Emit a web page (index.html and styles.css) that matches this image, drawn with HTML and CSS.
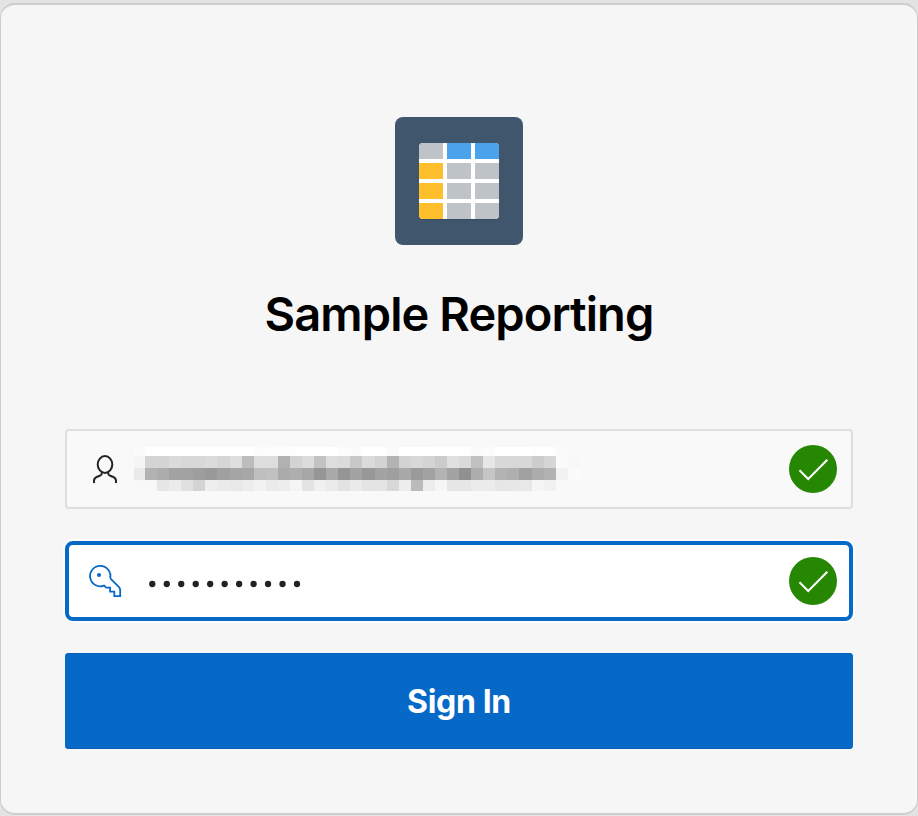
FILE: index.html
```html
<!DOCTYPE html>
<html lang="en">
<head>
<meta charset="utf-8">
<title>Sample Reporting</title>
<link rel="stylesheet" href="styles.css">
</head>
<body>
<main class="window">
  <svg class="logo" viewBox="0 0 128 128">
    <rect width="128" height="128" rx="8" fill="#3f566d"/>
    <rect x="24" y="27" width="80" height="76" rx="4" fill="#384c61"/>
    <clipPath id="sheet"><rect x="24" y="26" width="80" height="76" rx="4"/></clipPath>
    <g clip-path="url(#sheet)">
      <rect x="24" y="26" width="80" height="76" fill="#fff"/>
      <path fill="#bdc3c7" d="M24 26h24v16H24zM52 46h24v16H52zM80 46h24v16H80zM52 66h24v16H52zM80 66h24v16H80zM52 86h24v16H52zM80 86h24v16H80z"/>
      <path fill="#4aa3eb" d="M52 26h24v16H52zM80 26h24v16H80z"/>
      <path fill="#ffbf2d" d="M24 46h24v16H24zM24 66h24v16H24zM24 86h24v16H24z"/>
    </g>
  </svg>
  <h1 class="title">Sample Reporting</h1>
  <form class="form">
    <div class="field">
      <svg class="icon" viewBox="0 0 40 40" fill="none" stroke="#222326" stroke-width="2">
        <ellipse cx="20" cy="15.5" rx="7.3" ry="8.4"/>
        <path d="M16.800 23v1.600c0 1.200-.8 1.700-2 2.100l-2.600 1C10 28.700 9 29.700 9 31.800V34M23.200 23v1.600c0 1.200.8 1.700 2 2.100l2.600 1C30 28.700 31 29.700 31 31.800V34"/>
      </svg>
      <svg class="redacted" viewBox="0 0 446 44" shape-rendering="crispEdges"></svg>
      <svg class="check" viewBox="0 0 48 48" fill="none">
        <circle cx="24" cy="24" r="24" fill="#268703"/>
        <path d="M10.500 25.300l8.700 8.700L38.300 14.800" stroke="#fff" stroke-width="2"/>
      </svg>
    </div>
    <div class="field focused">
      <svg class="icon" viewBox="0 0 40 40" fill="none" stroke="#0669c8" stroke-width="1.800">
        <path d="M25.200 17.300A10.200 10.200 0 1 0 19 24.600L21.300 26.600H25.100V30.700H29.300V35.100H35.200V29.200C35.200 27.600 34.700 26.700 33.800 25.800L26 18.200Q25.100 17.200 25.200 15"/>
        <circle cx="14" cy="14" r="2" fill="#0669c8" stroke="none"/>
      </svg>
      <svg class="dots" viewBox="0 0 160 40" fill="#222">
        <circle cx="7.300" cy="23" r="3.150"/><circle cx="21.770" cy="23" r="3.150"/><circle cx="36.240" cy="23" r="3.150"/><circle cx="50.710" cy="23" r="3.150"/><circle cx="65.180" cy="23" r="3.150"/><circle cx="79.650" cy="23" r="3.150"/><circle cx="94.120" cy="23" r="3.150"/><circle cx="108.590" cy="23" r="3.150"/><circle cx="123.060" cy="23" r="3.150"/><circle cx="137.530" cy="23" r="3.150"/><circle cx="152" cy="23" r="3.150"/>
      </svg>
      <svg class="check" viewBox="0 0 48 48" fill="none">
        <circle cx="24" cy="24" r="24" fill="#268703"/>
        <path d="M10.500 25.300l8.700 8.700L38.300 14.800" stroke="#fff" stroke-width="2"/>
      </svg>
    </div>
    <button class="submit" type="button">Sign In</button>
  </form>
</main>
<script src="mosaic.js"></script>
</body>
</html>
```
FILE: mosaic.js
```js
// Grey levels of the masked user name, one hex pair per block.
const rows = [
  { y: 0, h: 9, v: "fb fe fe fe fe fe fe ff fe ff fc fd fd fe fe fe ff fc fb ff fe fa ff ff ff fe fe fe fa fc ff ff ff fe fe fa f9" },
  { y: 9, h: 12, v: "f5 d4 d4 db d8 d8 db d6 de bc dd dd b1 d3 dc c2 dd db c8 db d3 b3 d3 d8 d4 cc e0 da c1 e7 d8 d8 d8 cc d6 fb f8" },
  { y: 21, h: 12, v: "ea b2 ac a2 a2 9e 99 a0 a5 a7 bf c1 ab ae a7 96 a9 95 a3 98 a3 9f a8 9a a2 b3 a3 90 ae c6 b3 af a1 ac b2 f2 fb" },
  { y: 33, h: 11, v: "f8 f8 e6 eb e1 d4 ee eb e8 ed f2 eb ed f5 e3 f0 eb e3 ea e4 e5 d8 ed bb ed f6 e6 e6 ec ec e6 e7 e8 f5 f1 f9 f9" }
];
const edge = i => i === 0 ? 0 : Math.round(11 + (i - 1) * 12.08);
document.querySelector(".redacted").innerHTML = rows.map(r =>
  r.v.split(" ").map((c, i) =>
    `<rect x="${edge(i)}" y="${r.y}" width="${edge(i + 1) - edge(i)}" height="${r.h}" fill="#${c}${c}${c}"/>`
  ).join("")
).join("");
```
FILE: styles.css
```css
* { box-sizing: border-box; }
html { height: 100%; background: #e3e3e3; }
body {
  margin: 0;
  height: 816px;
  padding-top: 3px;
  overflow: hidden;
  font-family: Inter, "Liberation Sans", sans-serif;
}
.window {
  height: 812px;
  padding: 112px 64px 0;
  border: solid #cdcdcd;
  border-width: 2px 1px;
  border-radius: 15px;
  background: #f6f6f6;
  display: flex;
  flex-direction: column;
  align-items: center;
}
.logo { width: 128px; height: 128px; flex: none; }
.title {
  margin: 39px 0 85px;
  height: 60px;
  line-height: 60px;
  font-size: 47px;
  font-weight: 600;
  letter-spacing: -0.92px;
  color: #000;
  white-space: nowrap;
}
.form {
  width: 788px;
  display: flex;
  flex-direction: column;
  gap: 32px;
}
.field {
  height: 80px;
  padding: 0 14px 0 18px;
  border: 2px solid #dedede;
  border-radius: 4px;
  background: #f9f9f9;
  display: flex;
  align-items: center;
}
.field.focused {
  padding: 0 12px 0 16px;
  border: 4px solid #0669c8;
  border-radius: 8px;
  background: #fff;
  box-shadow: 0 0 0 2px #fcfcfc;
}
.icon { width: 40px; height: 40px; flex: none; }
.redacted { width: 446px; height: 44px; margin-left: 9px; }
.dots { width: 160px; height: 40px; margin-left: 20px; }
.check { width: 48px; height: 48px; margin-left: auto; flex: none; }
.submit {
  height: 96px;
  padding: 2px 0 0;
  border: 0;
  border-radius: 4px;
  background: #0669c8;
  box-shadow: inset 0 -1px #0860b8, inset 0 1px #0860b8;
  color: #fff;
  font: 700 32px/40px Inter, "Liberation Sans", sans-serif;
  letter-spacing: -0.35px;
}
```
